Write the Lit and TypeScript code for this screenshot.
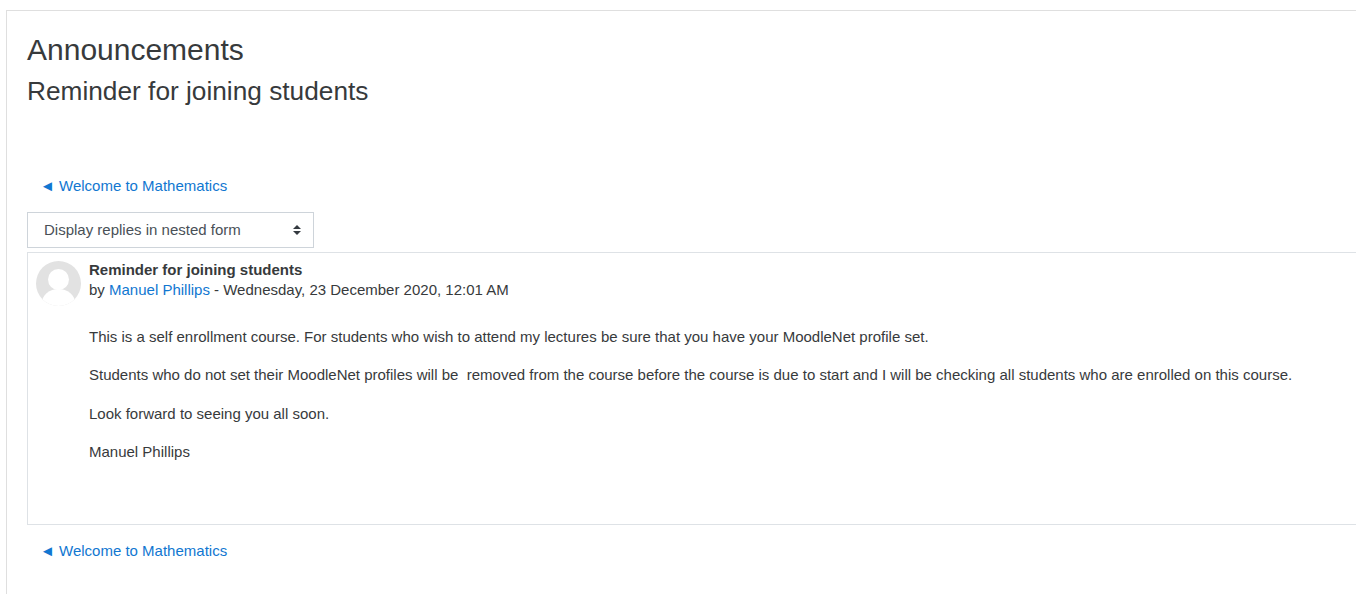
import { LitElement, html, css } from "lit";
import { customElement } from "lit/decorators.js";

@customElement("app-root")
export class AppRoot extends LitElement {
  static styles = css`
    :host {
      display: block;
      height: 594px;
      overflow: hidden;
      background: #fff;
      font-family: "Liberation Sans", Arial, sans-serif;
      font-size: 15px;
      line-height: 22.5px;
      color: #373a3c;
    }
    a {
      color: #1177d1;
      text-decoration: none;
    }
    .card {
      margin: 10px 0 0 6px;
      height: 584px;
      box-sizing: border-box;
      border-top: 1px solid #dfdfdf;
      border-left: 1px solid #dfdfdf;
      padding: 21px 0 0 20px;
    }
    h2 {
      margin: 0;
      font-size: 30px;
      font-weight: 400;
      line-height: 36px;
    }
    h3 {
      margin: 8px 0 0;
      font-size: 26.25px;
      font-weight: 400;
      line-height: 31.5px;
    }
    .nav {
      padding-left: 13px;
    }
    .nav.top {
      margin-top: 67.5px;
    }
    .nav.bottom {
      margin-top: 15px;
    }
    .mode {
      box-sizing: border-box;
      width: 287px;
      height: 36px;
      margin-top: 14.5px;
      padding: 0 12px 0 16px;
      border: 1px solid #ced4da;
      color: #495057;
      display: flex;
      align-items: center;
      justify-content: space-between;
    }
    .post {
      box-sizing: border-box;
      height: 273px;
      margin-top: 4px;
      border: 1px solid #dee2e6;
      border-right: 0;
      padding: 7px 0 0 8px;
      display: flex;
      gap: 8px;
    }
    .avatar {
      flex: none;
      width: 45px;
      height: 45px;
      margin-top: 1px;
    }
    .subject {
      font-weight: 700;
      line-height: 20px;
    }
    .by {
      line-height: 20px;
    }
    .body {
      margin-top: 26px;
    }
    p {
      margin: 0 0 15.83px;
      white-space: pre-wrap;
    }
  `;

  render() {
    return html`
      <div class="card">
        <h2>Announcements</h2>
        <h3>Reminder for joining students</h3>
        <div class="nav top"><a href="#">◄ Welcome to Mathematics</a></div>
        <div class="mode">
          <span>Display replies in nested form</span>
          <svg width="8" height="10" viewBox="0 0 8 10">
            <path d="M4 0 8 4H0ZM4 10 0 6H8Z" fill="#343a40" />
          </svg>
        </div>
        <div class="post">
          <svg class="avatar" viewBox="0 0 45 45">
            <defs><clipPath id="c"><circle cx="22.5" cy="22.5" r="22.5" /></clipPath></defs>
            <circle cx="22.5" cy="22.5" r="22.5" fill="#e2e2e2" />
            <g clip-path="url(#c)" fill="#fff">
              <circle cx="22.5" cy="18.5" r="10.5" />
              <ellipse cx="22.5" cy="42" rx="16.5" ry="14" />
            </g>
          </svg>
          <div>
            <div class="subject">Reminder for joining students</div>
            <div class="by">by <a href="#">Manuel Phillips</a> - Wednesday, 23 December 2020, 12:01 AM</div>
            <div class="body">
              <p>This is a self enrollment course. For students who wish to attend my lectures be sure that you have your MoodleNet profile set.</p>
              <p>Students who do not set their MoodleNet profiles will be  removed from the course before the course is due to start and I will be checking all students who are enrolled on this course.</p>
              <p>Look forward to seeing you all soon.</p>
              <p>Manuel Phillips</p>
            </div>
          </div>
        </div>
        <div class="nav bottom"><a href="#">◄ Welcome to Mathematics</a></div>
      </div>
    `;
  }
}
